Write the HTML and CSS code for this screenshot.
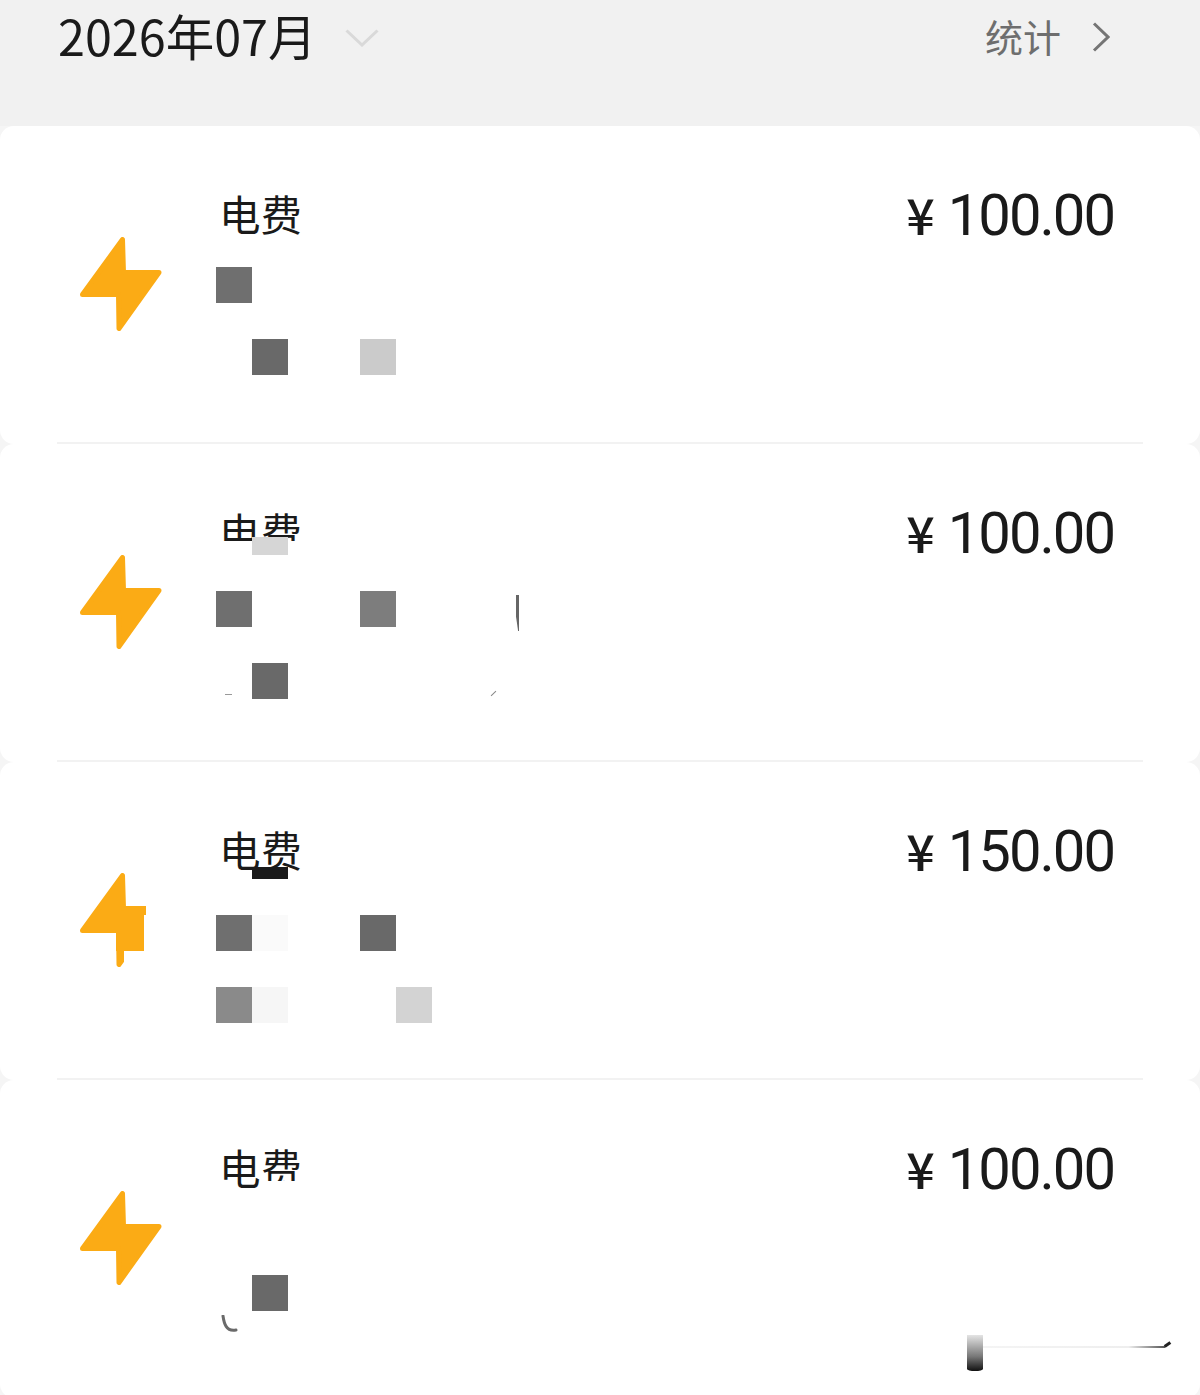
FILE: index.html
```html
<!DOCTYPE html>
<html lang="zh-CN">
<head>
<meta charset="utf-8">
<title>账单</title>
<link rel="stylesheet" href="styles.css">
</head>
<body>
<main class="page">
  <header class="top">
    <div class="month">
      <span class="month-text">2026年07月</span>
      <svg class="chev-down" width="34" height="18" viewBox="0 0 34 18"><path d="M1.500 1.500 17 16 32.500 1.500"/></svg>
    </div>
    <div class="stats">
      <span class="stats-text">统计</span>
      <svg class="chev-right" width="18" height="30" viewBox="0 0 18 30"><path d="M2 1.500 16 15 2 28.500"/></svg>
    </div>
  </header>
  <section class="list">
    <article class="card">
      <div class="row">
        <svg class="bolt" width="82" height="94" viewBox="0 0 82 94"><path d="M42.500 2.500 43.500 35.500H79L39 91.500 38.500 57.500H2.500Z"/></svg>
        <div class="info"><div class="title">电费</div></div>
        <div class="amount"><span class="yen">¥</span><span class="num">100.00</span></div>
      </div>
      <div class="mosaic m1">
        <i class="tile c0 r0 g6e"></i>
        <i class="tile c1 r2 g68"></i>
        <i class="tile c4 r2 gcc"></i>
      </div>
    </article>
    <article class="card">
      <div class="row">
        <svg class="bolt" width="82" height="94" viewBox="0 0 82 94"><path d="M42.500 2.500 43.500 35.500H79L39 91.500 38.500 57.500H2.500Z"/></svg>
        <div class="info"><div class="title">电费</div></div>
        <div class="amount"><span class="yen">¥</span><span class="num">100.00</span></div>
      </div>
      <div class="mask mask-a"></div>
      <div class="mosaic m2">
        <i class="tile half c1 r0 gd6"></i>
        <i class="tile c0 r2 g6e"></i>
        <i class="tile c4 r2 g7c"></i>
        <i class="tile c1 r4 g68"></i>
      </div>
      <i class="stroke s-bar"></i>
      <i class="stroke s-left"></i>
      <i class="stroke s-right"></i>
    </article>
    <article class="card">
      <div class="row">
        <svg class="bolt" width="82" height="94" viewBox="0 0 82 94"><path d="M42.500 2.500 43.500 35.500H79L39 91.500 38.500 57.500H2.500Z"/></svg>
        <div class="info"><div class="title">电费</div></div>
        <div class="amount"><span class="yen">¥</span><span class="num">150.00</span></div>
      </div>
      <div class="bolt-cut-top"></div>
      <div class="bolt-cut"></div>
      <div class="bolt-patch"></div>
      <div class="bolt-fill"></div>
      <div class="mosaic m3">
        <i class="tile third c1 r0 g1a"></i>
        <i class="tile c0 r2 g6e"></i>
        <i class="tile c1 r2 gfa"></i>
        <i class="tile c4 r2 g68"></i>
        <i class="tile c0 r4 g8a"></i>
        <i class="tile c1 r4 gf6"></i>
        <i class="tile c5 r4 gd3"></i>
      </div>
    </article>
    <article class="card">
      <div class="row">
        <svg class="bolt" width="82" height="94" viewBox="0 0 82 94"><path d="M42.500 2.500 43.500 35.500H79L39 91.500 38.500 57.500H2.500Z"/></svg>
        <div class="info"><div class="title">电费</div></div>
        <div class="amount"><span class="yen">¥</span><span class="num">100.00</span></div>
      </div>
      <div class="mask mask-b"></div>
      <div class="mosaic m4">
        <i class="tile c1 r0 g68"></i>
      </div>
      <svg class="hook" width="18" height="20" viewBox="0 0 18 20"><path d="M2 1C3 8 5 17 15 15"/></svg>
      <div class="smear">
        <i class="smear-bar"></i>
        <i class="smear-line"></i>
        <i class="smear-tick"></i>
      </div>
    </article>
  </section>
</main>
</body>
</html>
```

FILE: styles.css
```css
* { box-sizing: border-box; }

html, body {
  margin: 0;
  height: 1395px;
  overflow: hidden;
  background: #f5f5f5;
}

.page {
  width: 1200px;
  height: 1395px;
  overflow: hidden;
  font-family: "Noto Sans CJK SC", "Noto Sans", sans-serif;
  color: #1a1a1a;
}

.top {
  height: 126px;
  background: #f1f1f1;
  display: flex;
  justify-content: space-between;
  align-items: flex-start;
  padding: 4px 90px 0 58px;
}

.month, .stats {
  display: flex;
  align-items: center;
  height: 66px;
}

.month-text {
  font-size: 48.500px;
  line-height: 66px;
  margin-top: -4px;
}

.chev-down {
  margin-left: 28px;
  margin-top: 2px;
}

.chev-down path {
  fill: none;
  stroke: #d9d9d9;
  stroke-width: 3;
}

.stats-text {
  font-size: 38px;
  line-height: 66px;
  margin-top: -2px;
  color: #6e6e6e;
}

.chev-right {
  margin-left: 31px;
}

.chev-right path {
  fill: none;
  stroke: #757575;
  stroke-width: 3;
}

.card {
  position: relative;
  height: 318px;
  background: #fff;
  border-radius: 14px;
}

.row {
  height: 318px;
  margin: 0 57px;
  padding: 0 29px 0 23px;
  border-bottom: 2px solid #f2f2f2;
  display: flex;
  align-items: flex-start;
}

.bolt {
  flex: none;
  margin-top: 111px;
}

.bolt path {
  fill: #fbab15;
  stroke: #fbab15;
  stroke-width: 5;
  stroke-linejoin: round;
}

.info {
  flex: 1;
  margin-left: 57px;
  padding-top: 58px;
}

.title {
  font-size: 41.500px;
  line-height: 58px;
}

.amount {
  display: flex;
  align-items: baseline;
  margin-top: 47px;
  font-family: Roboto, "Noto Sans", sans-serif;
  line-height: 80px;
}

.yen {
  font-family: "Noto Sans CJK SC", sans-serif;
  font-size: 50px;
  font-weight: 500;
  margin-right: 13px;
}

.num {
  font-size: 58px;
  letter-spacing: -2px;
}

.mosaic {
  position: absolute;
  left: 216px;
  display: grid;
  grid-template-columns: repeat(6, 36px);
  grid-auto-rows: 36px;
}

.m1 { top: 141px; }
.m2 { top: 75px; }
.m3 { top: 81px; }
.m4 { top: 195px; }

.tile { display: block; width: 36px; height: 36px; }
.tile.half { height: 18px; align-self: end; }
.tile.third { height: 12px; align-self: end; }

.c0 { grid-column: 1; }
.c1 { grid-column: 2; }
.c4 { grid-column: 5; }
.c5 { grid-column: 6; }
.r0 { grid-row: 1; }
.r2 { grid-row: 3; }
.r4 { grid-row: 5; }

.g1a { background: #1a1a1a; }
.g68 { background: #696969; }
.g6e { background: #6f6f6f; }
.g7c { background: #7d7d7d; }
.g8a { background: #8a8a8a; }
.gcc { background: #cbcbcb; }
.gd3 { background: #d3d3d3; }
.gd6 { background: #d6d6d6; }
.gf6 { background: #f6f6f6; }
.gfa { background: #fafafa; }

.mask { position: absolute; background: #fff; }
.mask-a { left: 216px; top: 97px; width: 90px; height: 30px; }
.mask-b { left: 260px; top: 101px; width: 46px; height: 14px; }

.stroke { position: absolute; display: block; background: #666; }
.s-bar { left: 516px; top: 151px; width: 3px; height: 36px; clip-path: polygon(0 0, 100% 0, 100% 100%, 70% 100%, 0 60%); }
.s-left { left: 225px; top: 250px; width: 7px; height: 1px; background: #999; }
.s-right { left: 490px; top: 249px; width: 7px; height: 1px; background: #888; transform: rotate(-45deg); }

.bolt-cut-top { position: absolute; left: 146px; top: 140px; width: 22px; height: 13px; background: #fff; }
.bolt-cut { position: absolute; left: 144px; top: 153px; width: 24px; height: 36px; background: #fff; }
.bolt-patch { position: absolute; left: 124px; top: 189px; width: 24px; height: 18px; background: #fff; }
.bolt-fill { position: absolute; left: 116px; top: 153px; width: 28px; height: 36px; background: #fbab15; }

.hook { position: absolute; left: 221px; top: 235px; }
.hook path { fill: none; stroke: #6a6a6a; stroke-width: 3; stroke-linecap: round; }

.smear { position: absolute; left: 967px; top: 255px; width: 206px; height: 36px; }
.smear-bar {
  position: absolute; left: 0; top: 0; width: 16px; height: 36px;
  background: linear-gradient(#e4e4e4, #777 60%, #111);
  border-radius: 0 0 8px 8px / 0 0 2px 2px;
}
.smear-line {
  position: absolute; left: 16px; top: 11px; width: 182px; height: 2px;
  background: linear-gradient(90deg, #f4f4f4, #eee 80%, #555);
}
.smear-tick {
  position: absolute; left: 197px; top: 8px; width: 7px; height: 3px;
  background: #222; transform: rotate(-35deg);
}
```
